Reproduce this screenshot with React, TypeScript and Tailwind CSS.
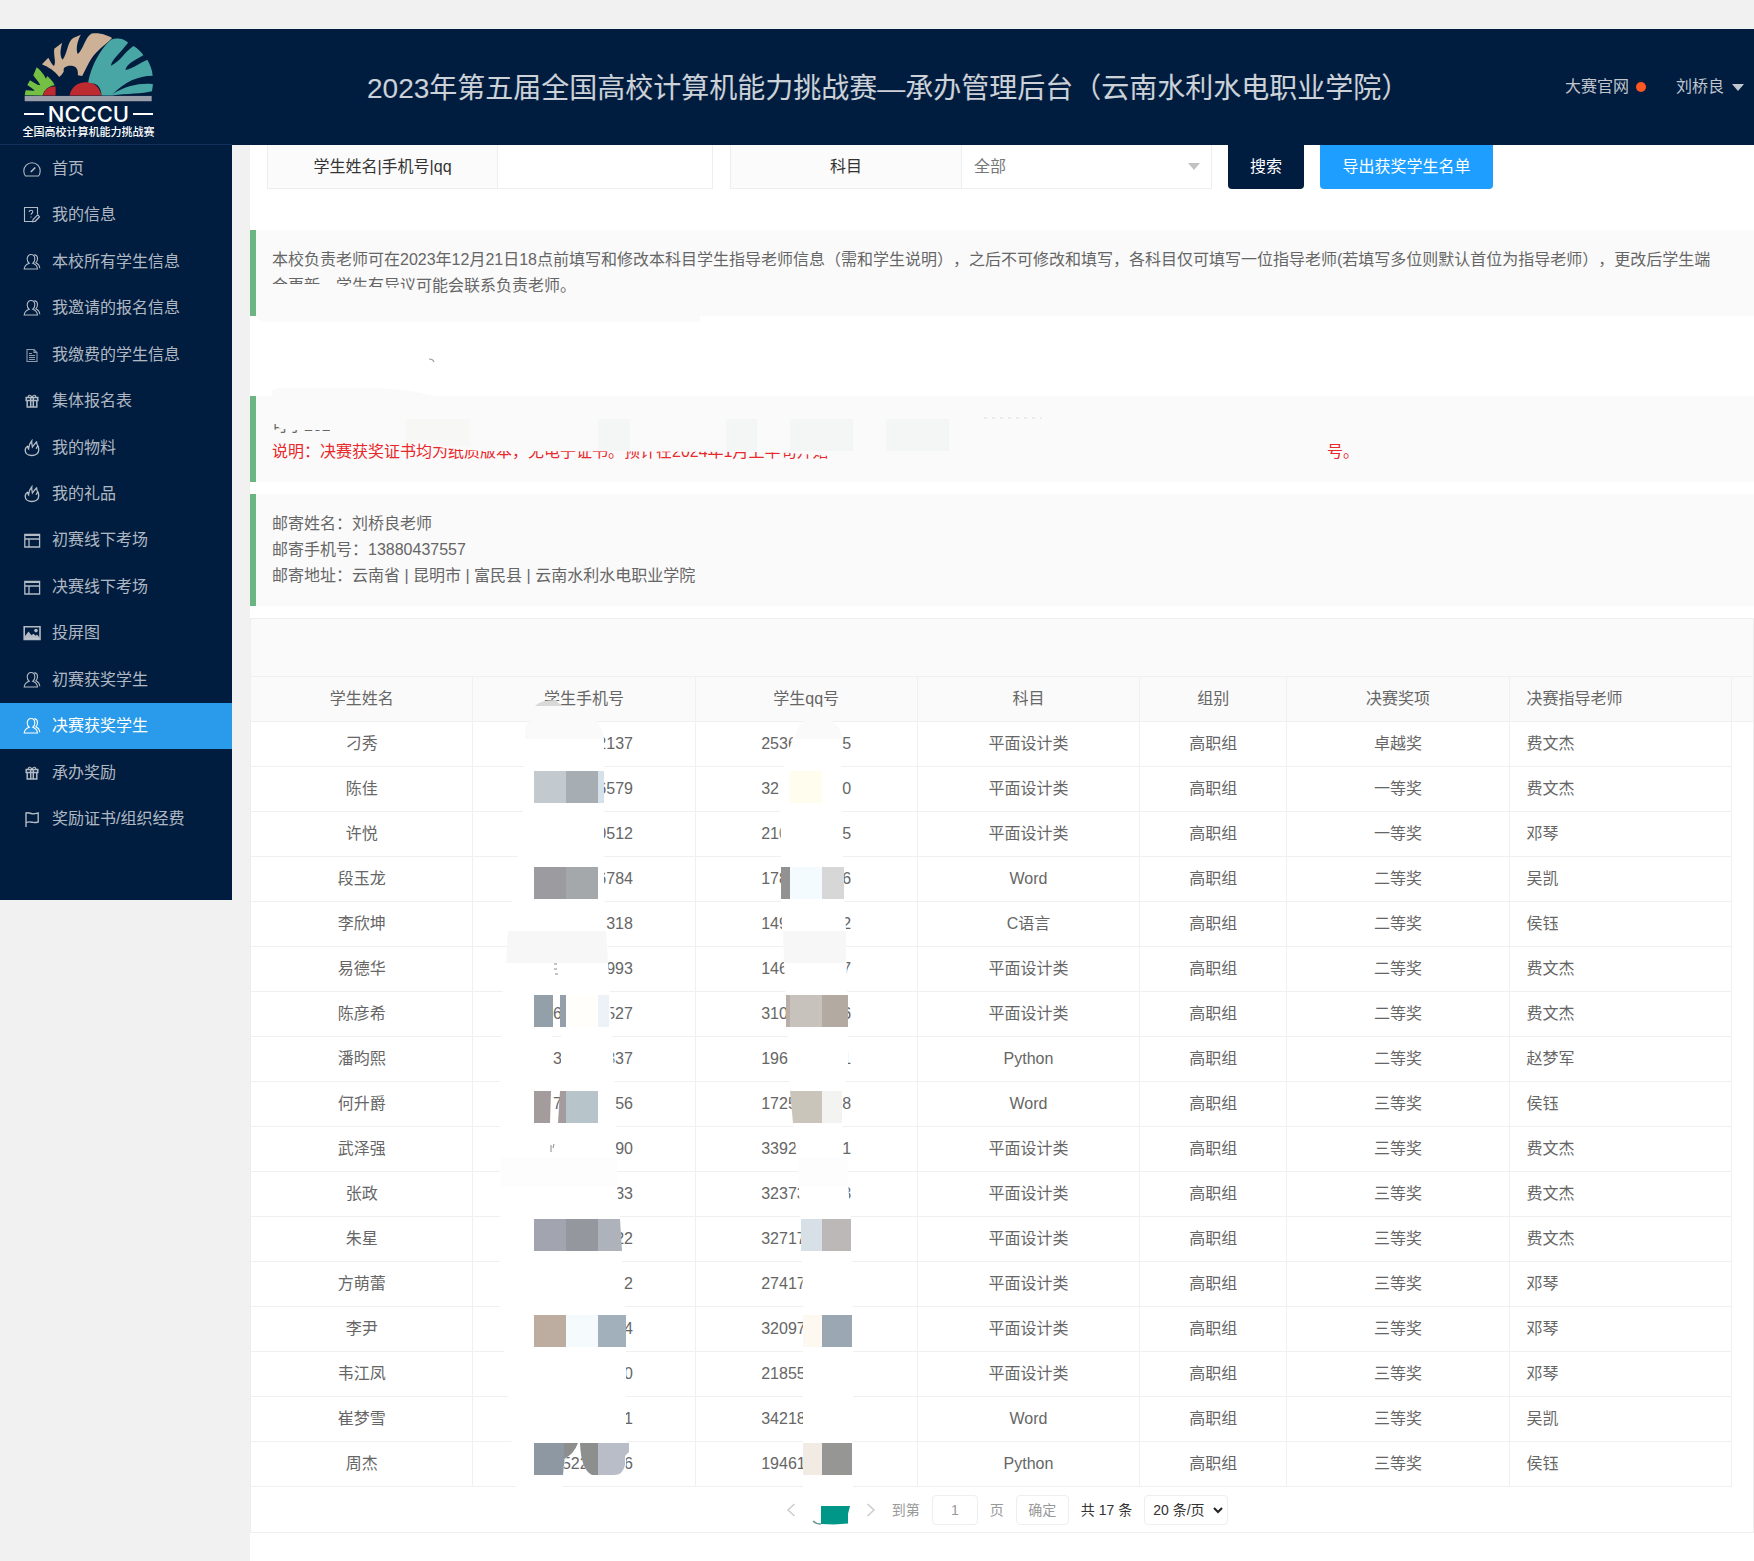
import type { ReactNode } from 'react';

type IconName = 'home' | 'survey' | 'user' | 'file' | 'gift' | 'fire' | 'layout' | 'picture' | 'flag';

const menu: { label: string; icon: IconName }[] = [
  { label: '首页', icon: 'home' },
  { label: '我的信息', icon: 'survey' },
  { label: '本校所有学生信息', icon: 'user' },
  { label: '我邀请的报名信息', icon: 'user' },
  { label: '我缴费的学生信息', icon: 'file' },
  { label: '集体报名表', icon: 'gift' },
  { label: '我的物料', icon: 'fire' },
  { label: '我的礼品', icon: 'fire' },
  { label: '初赛线下考场', icon: 'layout' },
  { label: '决赛线下考场', icon: 'layout' },
  { label: '投屏图', icon: 'picture' },
  { label: '初赛获奖学生', icon: 'user' },
  { label: '决赛获奖学生', icon: 'user' },
  { label: '承办奖励', icon: 'gift' },
  { label: '奖励证书/组织经费', icon: 'flag' },
];

const activeItem = '决赛获奖学生';

type Row = {
  name: string;
  phone: [string, string];
  qq: [string, string];
  subject: string;
  award: string;
  teacher: string;
};

const rows: Row[] = [
  { name: '刁秀', phone: ['', '2137'], qq: ['2536', '5'], subject: '平面设计类', award: '卓越奖', teacher: '费文杰' },
  { name: '陈佳', phone: ['', '6579'], qq: ['32', '0'], subject: '平面设计类', award: '一等奖', teacher: '费文杰' },
  { name: '许悦', phone: ['', '0512'], qq: ['210', '5'], subject: '平面设计类', award: '一等奖', teacher: '邓琴' },
  { name: '段玉龙', phone: ['', '6784'], qq: ['178', '6'], subject: 'Word', award: '二等奖', teacher: '吴凯' },
  { name: '李欣坤', phone: ['', '318'], qq: ['149', '2'], subject: 'C语言', award: '二等奖', teacher: '侯钰' },
  { name: '易德华', phone: ['', '993'], qq: ['146', '7'], subject: '平面设计类', award: '二等奖', teacher: '费文杰' },
  { name: '陈彦希', phone: ['6', '527'], qq: ['310', '6'], subject: '平面设计类', award: '二等奖', teacher: '费文杰' },
  { name: '潘昀熙', phone: ['3', '337'], qq: ['196', '1'], subject: 'Python', award: '二等奖', teacher: '赵梦军' },
  { name: '何升爵', phone: ['7', '56'], qq: ['1725', '8'], subject: 'Word', award: '三等奖', teacher: '侯钰' },
  { name: '武泽强', phone: ['', '90'], qq: ['3392', '1'], subject: '平面设计类', award: '三等奖', teacher: '费文杰' },
  { name: '张政', phone: ['', '33'], qq: ['32373', '3'], subject: '平面设计类', award: '三等奖', teacher: '费文杰' },
  { name: '朱星', phone: ['', '22'], qq: ['32717', ''], subject: '平面设计类', award: '三等奖', teacher: '费文杰' },
  { name: '方萌蕾', phone: ['', '2'], qq: ['27417', ''], subject: '平面设计类', award: '三等奖', teacher: '邓琴' },
  { name: '李尹', phone: ['', '4'], qq: ['32097', ''], subject: '平面设计类', award: '三等奖', teacher: '邓琴' },
  { name: '韦江凤', phone: ['', '0'], qq: ['21855', ''], subject: '平面设计类', award: '三等奖', teacher: '邓琴' },
  { name: '崔梦雪', phone: ['', '1'], qq: ['34218', ''], subject: 'Word', award: '三等奖', teacher: '吴凯' },
  { name: '周杰', phone: ['522', '6'], qq: ['19461', ''], subject: 'Python', award: '三等奖', teacher: '侯钰' },
];

function Icon({ name }: { name: IconName }) {
  const shapes: Record<IconName, ReactNode> = {
    home: (
      <>
        <path d="M2.500 16C1.300 14.500.8 12.800.8 11a8.200 8.200 0 0 1 16.400 0c0 1.800-.5 3.500-1.700 5z" />
        <path d="M7.800 12l4.500-4.500" strokeWidth="1.700" />
      </>
    ),
    survey: (
      <>
        <path d="M9 15.500H1.500v-14h13v6.500" />
        <path d="M6.200 6c0-1 .8-1.700 1.800-1.700s1.800.7 1.800 1.700c0 1.200-1.800 1.300-1.800 2.700M8 10.400v1" />
        <path d="M9.500 15.800l.6-2.300 4.600-4.600 1.800 1.800-4.600 4.600zM11.800 15.900l4.700-4.700" />
      </>
    ),
    user: (
      <>
        <path d="M6.200 10.300C4.800 9.200 4.200 7.700 4.200 6c0-2.600 1.500-4.500 3.800-4.500S11.800 3.400 11.800 6c0 1.700-.6 3.200-2 4.300 2.700 1 4.500 2.700 4.700 5.700H1.200c.2-3 2.200-4.700 5-5.700z" />
        <path d="M11.300 1.600c2 .3 3.200 2 3.200 4.200 0 1.600-.6 3-1.700 4 2.200 1 3.700 2.600 4 5.400" />
      </>
    ),
    file: (
      <>
        <path d="M4 3.500h7l3 3v9H4zM11 3.500v3h3" opacity=".8" />
        <path d="M6 7.500h3M6 9.500h6M6 11.500h6M6 13.500h6" opacity=".8" />
      </>
    ),
    gift: (
      <>
        <path strokeWidth="1.500" d="M3.200 5.500h11.600v3H3.200zM4.200 8.500h9.600v6.500H4.200zM7.700 5.500v9.500M10.300 5.500v9.500" />
        <path d="M9 5.200C8 2.800 5.200 2.300 5.200 5M9 5.200c1-2.400 3.800-2.900 3.800-.2" />
      </>
    ),
    fire: (
      <>
        <path strokeWidth="1.400" d="M5 7C3.200 8 2.200 9.600 2.200 11.300c0 3 2.700 5.200 6.600 5.200s6.900-2.200 6.900-5.500c0-1.800-.3-2.900-.8-4" />
        <path strokeWidth="1.300" d="M5 7c-.3 1.200-.1 2.200.6 3C5.800 7 7 3.800 8.800 1.800c-.3 2.200.2 3.700.6 6.200C10.600 6.500 12 4.500 13.800 2.500c-.5 2 .2 3 1.100 4.500-.8.600-1.500 1.500-1.700 2.800" />
      </>
    ),
    layout: <path strokeWidth="1.300" d="M1.800 3.500h14.800v12.500H1.800zM1.800 4.300h14.800M1.800 8h14.800M6 8V16" />,
    picture: (
      <>
        <path d="M1.200 2.700h15.800v12.800H1.200z" strokeWidth="1.600" />
        <path d="M2 15V12l3.500-4.500 3 3.700 2-1.500 2.200 2L14 10.500l2.200 2.500v2z" fill="currentColor" stroke="none" />
        <circle cx="13" cy="6.600" r="1.800" fill="currentColor" stroke="none" />
      </>
    ),
    flag: <path d="M3 17V3c3-1.300 5 1.300 8 .8 1.500-.2 2.500-.5 4.200-.8v9c-3 .8-4.200.8-6.200.2-2.300-.6-4-.5-6 .4" strokeWidth="1.400" />,
  };
  return (
    <svg viewBox="0 0 18 18" className="size-[18px] shrink-0" fill="none" stroke="currentColor" strokeWidth="1.100" aria-hidden="true">
      {shapes[name]}
    </svg>
  );
}

function Logo() {
  return (
    <div className="ml-6 flex w-[129px] flex-col items-center">
      <svg viewBox="42 20 388 210" className="h-[70px] w-full" aria-hidden="true">
        <rect x="44" y="212" width="382" height="16" fill="#9a9ea8" />
        <path fill="#73c044" d="M44 210L47 195C56 194 66 198 74 196C68 188 58 184 52 179L60 165C70 170 80 180 91 180C86 168 76 160 70 150L80 126C96 138 104 152 108 160L112 152C120 160 130 168 134 180C112 184 102 196 98 211Z" />
        <path fill="#cdb196" d="M96 117L115 97C120 104 124 116 132 122C140 112 130 90 133 70L157 52C150 76 150 92 158 103C172 88 172 50 190 38L213 28C200 50 198 76 204 86C220 72 224 40 244 25C265 20 292 28 307 38C285 60 262 75 246 98C236 112 226 136 217 152L204 150C206 128 196 121 181 121C168 121 158 128 162 137C158 146 154 150 148 155C134 136 116 126 96 117Z" />
        <path fill="#48a6a4" d="M234 180C240 130 270 70 305 42C320 36 345 40 355 52C330 85 308 100 303 121C330 110 345 80 371 62C385 70 395 80 401 90C372 106 352 116 347 134C372 128 392 112 413 103C422 118 428 136 429 151C385 152 345 168 308 208C345 180 400 172 430 177L427 198C400 206 350 204 308 211L275 211C275 185 255 165 234 180Z" />
        <path fill="#bd2b30" d="M179 211C184 186 202 171 228 171C254 171 270 186 275 211ZM99 211C104 192 118 183 137 184V211Z" />
      </svg>
      <div className="flex w-full items-center gap-1 text-white">
        <span className="h-[2px] flex-1 bg-white" />
        <span className="font-['Inter',sans-serif] text-[22px] font-medium leading-6">NCCCU</span>
        <span className="h-[2px] flex-1 bg-white" />
      </div>
      <span className="whitespace-nowrap text-[11px] font-medium leading-3 text-white">全国高校计算机能力挑战赛</span>
    </div>
  );
}

function Notice({ className, children }: { className: string; children: ReactNode }) {
  return (
    <blockquote className={`relative border-l-[6px] border-[#6ab581] bg-[#fafafa] py-[17px] pl-4 leading-[26px] text-[#666] ${className}`}>
      {children}
    </blockquote>
  );
}

/* Smears and mosaic tiles that hide part of the phone and QQ numbers. */
function Redactions() {
  const tiles: [number, number, number, string][] = [
    [534, 771, 32, '#c2c9cf'], [566, 771, 32, '#a6aeb4'], [598, 771, 6, '#d5e0e8'],
    [534, 867, 32, '#9c9ba0'], [566, 867, 32, '#a4a8aa'],
    [534, 995, 19, '#93a0aa'], [560, 995, 6, '#93a0aa'], [566, 995, 32, '#fffefa'], [598, 995, 11, '#edf2f8'],
    [566, 1091, 32, '#b7c4ca'],
    [534, 1219, 32, '#a2a5af'], [566, 1219, 32, '#95979e'],
    [534, 1315, 32, '#bdada0'], [566, 1315, 32, '#f5fafd'], [598, 1315, 28, '#a1b0bb'],
    [790, 771, 32, '#fefdee'],
    [781, 867, 9, '#929292'], [790, 867, 32, '#f4fbfe'], [822, 867, 22, '#d7d7d7'],
    [786, 995, 4, '#b9afa8'], [790, 995, 32, '#c8c2bc'], [822, 995, 26, '#b3aaa2'],
    [822, 1091, 20, '#f3f3f1'],
    [801, 1219, 21, '#d7e0e7'], [822, 1219, 29, '#bbb8b7'],
    [803, 1315, 19, '#fef9f0'], [822, 1315, 30, '#9ba8b4'],
    [803, 1443, 19, '#f1ebe3'], [822, 1443, 30, '#969695'],
  ];
  return (
    <svg viewBox="480 660 460 860" className="pointer-events-none absolute left-[229px] top-[42px] h-[860px] w-[460px]" aria-hidden="true">
      <path
        fill="#fff"
        fillRule="evenodd"
        d="M525 738L604 738V880L607 940L610 1000L613 1050L615 1100L616 1170L619 1210L622 1260L626 1320L626 1443V1465Q625 1475 616 1475H592Q581 1470 580 1443H578Q572 1454 565 1459L562 1490H516L508 1397L500 1307V1082L503 992L512 902L523 812ZM552 997H561V1070H552ZM552 1092H561V1122H552Z"
      />
      <path fill="#fff" d="M793 737H841L843 865L846 930L848 1030L848 1075L842 1090L843 1155L848 1180L851 1230L853 1300V1490H803V1290L801 1235L798 1170L793 1120L789 1075L786 1000L782 930L780 780Z" />
      {tiles.map(([x, y, w, fill]) => (
        <rect key={`${x}-${y}`} x={x} y={y} width={w} height="32" fill={fill} />
      ))}
      <path fill="#a39b9c" d="M534 1091H551L550 1123H534ZM560 1091H566V1123H558Z" />
      <path fill="#aeb2bb" d="M598 1219H620L622 1251H598Z" />
      <path fill="#c9c5ba" d="M790 1091H822V1123H793Z" />
      <path fill="#8e98a2" d="M534 1443H566L563 1475H534Z" />
      <path fill="#8d8e8e" d="M564 1443H578Q574 1454 564 1459ZM580 1443H598V1475H592Q581 1470 580 1443Z" />
      <path fill="#b9bdc8" d="M598 1443H629V1452L625 1456V1465Q623 1475 614 1475H598Z" />
      <path fill="#fafafa" d="M525 739V728Q525 721 533 721H596Q603 728 604 739ZM795 739Q797 718 818 717Q840 718 842 739Z" />
      <path fill="#f7f7f7" d="M508 931H606L608 963H506ZM783 931H846V963H784Z" />
      <path fill="#fdfdfd" d="M501 1157H617V1187H501ZM798 1157H848V1187H798Z" />
      <path fill="#d9d9d7" d="M535 706Q540 700 556 700Q560 706 567 706Z" />
      <path stroke="#888" strokeWidth="1" d="M554 964h3M554 969h3M555 974h3M551 1145v7M554 1144l-1 4" />
    </svg>
  );
}

function ResultTable() {
  const th = 'h-[45px] border-b border-r border-[#f0f0f0] font-normal';
  const td = 'h-[45px] border-b border-r border-[#f0f0f0] text-center';
  return (
    <table className="w-full table-fixed border-separate border-spacing-0 text-[#666]">
      <colgroup>
        <col className="w-[14.8%]" />
        <col className="w-[14.8%]" />
        <col className="w-[14.8%]" />
        <col className="w-[14.8%]" />
        <col className="w-[9.8%]" />
        <col className="w-[14.8%]" />
        <col className="w-[14.8%]" />
        <col />
      </colgroup>
      <thead className="bg-[#fafafa]">
        <tr>
          <th className={th}>学生姓名</th>
          <th className={th}>学生手机号</th>
          <th className={th}>学生qq号</th>
          <th className={th}>科目</th>
          <th className={th}>组别</th>
          <th className={th}>决赛奖项</th>
          <th className={`${th} pl-[17px] text-left`}>决赛指导老师</th>
          <th className="border-b border-[#f0f0f0]" aria-hidden="true" />
        </tr>
      </thead>
      <tbody>
        {rows.map((r) => (
          <tr key={r.name}>
            <td className={td}>{r.name}</td>
            <td className={td}>
              <span className="mx-auto flex w-[98px] justify-between">
                <span className={r.phone[0].length > 1 ? 'pl-[27px]' : 'pl-[18px]'}>{r.phone[0]}</span>
                <span>{r.phone[1]}</span>
              </span>
            </td>
            <td className={td}>
              <span className="mx-auto flex w-[90px] justify-between">
                <span>{r.qq[0]}</span>
                <span>{r.qq[1]}</span>
              </span>
            </td>
            <td className={td}>{r.subject}</td>
            <td className={td}>高职组</td>
            <td className={td}>{r.award}</td>
            <td className={`${td} pl-[17px] !text-left`}>{r.teacher}</td>
            <td />
          </tr>
        ))}
      </tbody>
    </table>
  );
}

function Pager() {
  return (
    <nav aria-label="分页" className="flex h-[46px] items-center justify-center border-b border-[#eee] pl-[10px] text-sm text-[#999]">
      <button type="button" aria-label="上一页" className="text-[#ccc]">
        <svg viewBox="0 0 10 14" className="h-[14px] w-[10px]" fill="none" stroke="currentColor" strokeWidth="1.500"><path d="M8.500 1L2 7l6.500 6" /></svg>
      </button>
      <button type="button" aria-label="第 1 页" className="ml-4 h-[30px] w-[40px]">
        <svg viewBox="0 0 40 30" className="h-[30px] w-[40px]">
          <path fill="#009688" d="M9 11H38L36 19L36 28.500L22 29.500L9 29Z" />
          <path fill="none" stroke="#6d9a95" strokeWidth="1.500" d="M1 26Q4 29 9 29" />
        </svg>
      </button>
      <button type="button" aria-label="下一页" className="ml-[14px] text-[#ccc]">
        <svg viewBox="0 0 10 14" className="h-[14px] w-[10px]" fill="none" stroke="currentColor" strokeWidth="1.500"><path d="M1.500 1L8 7l-6.500 6" /></svg>
      </button>
      <label className="ml-4 flex items-center">
        到第
        <input defaultValue="1" aria-label="页码" className="mx-3 h-[30px] w-[46px] rounded-sm border border-[#eee] text-center outline-none" />
        页
      </label>
      <button type="button" className="ml-3 h-[30px] w-[53px] rounded-sm border border-[#eee]">确定</button>
      <span className="ml-3 text-[#333]">共 17 条</span>
      <span className="relative ml-3">
        <select aria-label="每页条数" className="h-[30px] w-[84px] appearance-none rounded-sm border border-[#eee] bg-white pl-2 text-[#333]">
          <option>20 条/页</option>
        </select>
        <svg viewBox="0 0 10 7" className="pointer-events-none absolute right-[5px] top-[12px] h-[7px] w-[10px]" fill="none" stroke="#222" strokeWidth="2" aria-hidden="true"><path d="M1 1l4 4 4-4" /></svg>
      </span>
    </nav>
  );
}

export default function App() {
  return (
    <div className="flex min-h-screen flex-col bg-[#f1f1f1] pt-[29px] font-['Liberation_Sans','Noto_Sans_CJK_SC',sans-serif] text-base [text-spacing-trim:space-all]">
      <header className="flex h-[116px] items-center bg-[#001c3e] text-white/75">
        <div className="flex h-full w-[232px] shrink-0 items-start border-b border-[#14305a] pt-[3px]">
          <Logo />
        </div>
        <h1 className="ml-[135px] whitespace-nowrap pt-1 text-[28px] text-white/80">2023年第五届全国高校计算机能力挑战赛—承办管理后台（云南水利水电职业学院）</h1>
        <div className="ml-auto flex items-center whitespace-nowrap pr-[10px]">
          <a href="#site" className="flex items-center gap-[7px]">
            大赛官网
            <span className="size-[10px] rounded-full bg-[#ff5722]" />
          </a>
          <button type="button" className="ml-[30px] flex items-center gap-2">
            刘桥良
            <span className="border-x-[6px] border-t-[7px] border-x-transparent border-t-white/75" />
          </button>
        </div>
      </header>

      <div className="flex flex-1 items-start">
        <aside className="w-[232px] shrink-0 bg-[#001c3e] pb-[58px]">
          <ul className="grid h-[697px] auto-rows-fr">
            {menu.map((m) => (
              <li key={m.label} className={m.label === activeItem ? 'bg-[#2a9bea] text-white' : 'text-white/70'}>
                <a href="#menu" className="flex h-full items-center gap-[11px] whitespace-nowrap pl-[23px] pt-px">
                  <Icon name={m.icon} />
                  {m.label}
                </a>
              </li>
            ))}
          </ul>
        </aside>

        <main className="ml-[18px] min-w-0 flex-1 self-stretch bg-white">
          <form className="flex h-11 pl-[17px] text-[#333]" onSubmit={(e) => e.preventDefault()}>
            <div className="flex w-[446px] border border-t-0 border-[#eee]">
              <label htmlFor="keyword" className="flex w-[230px] items-center justify-center border-r border-[#eee] bg-[#fbfbfb]">学生姓名|手机号|qq</label>
              <input id="keyword" className="min-w-0 flex-1 px-3 outline-none" />
            </div>
            <div className="ml-[17px] flex w-[482px] border border-t-0 border-[#eee]">
              <label htmlFor="subject" className="flex w-[231px] items-center justify-center border-r border-[#eee] bg-[#fbfbfb]">科目</label>
              <div className="relative flex flex-1">
                <select id="subject" className="w-full appearance-none bg-white pl-3 text-[#777] outline-none">
                  <option>全部</option>
                </select>
                <span className="pointer-events-none absolute right-[11px] top-[18px] border-x-[6px] border-t-[7px] border-x-transparent border-t-[#c2c2c2]" />
              </div>
            </div>
            <button type="submit" className="ml-4 w-[76px] rounded-b-sm bg-[#001c3e] text-white">搜索</button>
            <button type="button" className="ml-4 w-[173px] rounded-b-sm bg-[#1e9fff] text-white">导出获奖学生名单</button>
          </form>

          <Notice className="mt-[41px]">
            <p className="whitespace-nowrap">本校负责老师可在2023年12月21日18点前填写和修改本科目学生指导老师信息（需和学生说明），之后不可修改和填写，各科目仅可填写一位指导老师(若填写多位则默认首位为指导老师），更改后学生端</p>
            <p>会更新，学生有异议可能会联系负责老师。</p>
            <svg viewBox="256 230 500 140" className="pointer-events-none absolute left-0 top-0 h-[140px] w-[500px]" aria-hidden="true">
              <path fill="#fafafa" d="M268 284H325L345 286L400 288L425 292L440 298V302H268ZM256 316H700V322H264Q260 322 256 316Z" />
              <path d="M429 359q4 0 5 3" stroke="#999" strokeWidth="1.200" fill="none" />
            </svg>
          </Notice>

          <Notice className="mt-20">
            <p>可于2023年</p>
            <p className="flex whitespace-nowrap text-[#e8282b]">
              <span className="w-[1055px]">说明：决赛获奖证书均为纸质版本，无电子证书。预计在2024年1月上半旬开始</span>
              <span>号。</span>
            </p>
            <svg viewBox="256 380 800 100" className="pointer-events-none absolute left-0 -top-4 h-[100px] w-[800px]" aria-hidden="true">
              <path fill="#fafafa" d="M272 396V392Q272 388 280 388H379L410 391L437 396ZM268 410H345V430H290L279 428L277 424H268ZM330 410H360V436H330ZM420 440H860V460L842 460L830 456L790 453L760 452L480 451L444 448L420 443Z" />
              <path fill="#f7f7f5" d="M406 419H470V446L444 446L420 442H406Z" />
              <path fill="#f4f5f5" d="M598 419H630V451H598ZM726 419H757V451H726ZM790 419H853V451H790ZM886 419H949V451H886Z" />
              <path stroke="#ddd" strokeDasharray="3 5" d="M984 418H1042" />
            </svg>
          </Notice>

          <Notice className="mt-3">
            <p>邮寄姓名：刘桥良老师</p>
            <p>邮寄手机号：13880437557</p>
            <p>邮寄地址：云南省 | 昆明市 | 富民县 | 云南水利水电职业学院</p>
          </Notice>

          <section className="relative mt-3 border-l border-r border-[#eee]">
            <div className="h-[59px] border-y border-[#f0f0f0] bg-[#fafafa]" />
            <ResultTable />
            <Redactions />
            <Pager />
          </section>
        </main>
      </div>
    </div>
  );
}
